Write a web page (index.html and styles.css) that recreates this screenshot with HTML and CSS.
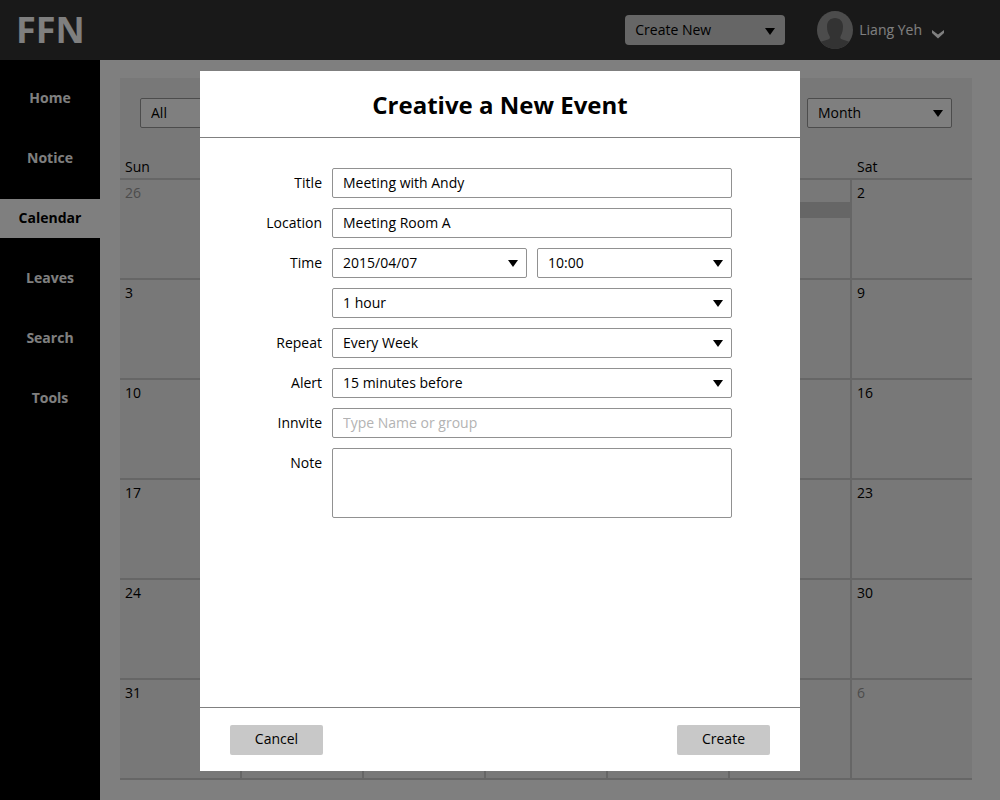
FILE: index.html
```html
<!DOCTYPE html>
<html lang="en">
<head>
<meta charset="utf-8">
<meta name="viewport" content="width=device-width, initial-scale=1">
<title>FFN Calendar</title>
<link rel="stylesheet" href="styles.css">
</head>
<body>
<div class="app">
  <header class="topbar">
    <a class="logo" href="#">FFN</a>
    <div class="topbar-actions">
      <select class="select create-new" aria-label="Create new item"><option>Create New</option></select>
      <button class="user" type="button">
        <svg class="avatar" viewBox="0 0 36 38" aria-hidden="true">
          <clipPath id="face"><ellipse cx="18" cy="19" rx="18" ry="19"/></clipPath>
          <g clip-path="url(#face)">
            <path fill="#999" d="M0 0h36v38H0z"/>
            <path fill="#666" d="M18 7c-5 0-8 3.500-8 8.500 0 4.500 1 7 2.500 9.500 1 2 .2 3-1.500 3.500L3 31v7h30v-7l-7.500-2.500c-2-.6-2.800-1.800-1.800-3.500C25.200 22.500 26 19.500 26 15.500 26 10.500 23 7 18 7z"/>
          </g>
        </svg>
        <span class="user-name">Liang Yeh</span>
        <svg class="chevron" viewBox="0 0 12 9" aria-hidden="true"><path d="M0 0l6 4.500L12 0v3L6 8.500 0 3z" fill="#fff"/></svg>
      </button>
    </div>
  </header>
  <nav class="sidebar" aria-label="Main">
    <a class="nav-link" href="#">Home</a>
    <a class="nav-link" href="#">Notice</a>
    <a class="nav-link nav-link-active" href="#" aria-current="page">Calendar</a>
    <a class="nav-link" href="#">Leaves</a>
    <a class="nav-link" href="#">Search</a>
    <a class="nav-link" href="#">Tools</a>
  </nav>
  <main class="content">
    <section class="panel">
      <div class="toolbar">
        <select class="select filter" aria-label="Filter"><option>All</option></select>
        <select class="select filter" aria-label="View"><option>Month</option></select>
      </div>
      <table class="calendar">
        <thead>
          <tr><th scope="col">Sun</th><td></td><td></td><td></td><td></td><td></td><th scope="col">Sat</th></tr>
        </thead>
        <tbody>
          <tr><td class="muted">26</td><td></td><td></td><td></td><td></td><td><div class="event"></div></td><td>2</td></tr>
          <tr><td>3</td><td></td><td></td><td></td><td></td><td></td><td>9</td></tr>
          <tr><td>10</td><td></td><td></td><td></td><td></td><td></td><td>16</td></tr>
          <tr><td>17</td><td></td><td></td><td></td><td></td><td></td><td>23</td></tr>
          <tr><td>24</td><td></td><td></td><td></td><td></td><td></td><td>30</td></tr>
          <tr><td>31</td><td></td><td></td><td></td><td></td><td></td><td class="muted">6</td></tr>
        </tbody>
      </table>
    </section>
  </main>
</div>

<div class="overlay">
  <form class="modal" role="dialog" aria-modal="true" aria-labelledby="modal-title">
    <h1 class="modal-title" id="modal-title">Creative a New Event</h1>
    <div class="fields">
      <label class="label" for="title">Title</label>
      <input class="field" id="title" type="text" value="Meeting with Andy">
      <label class="label" for="location">Location</label>
      <input class="field" id="location" type="text" value="Meeting Room A">
      <label class="label" for="date">Time</label>
      <div class="time">
        <select class="select" id="date"><option>2015/04/07</option></select>
        <select class="select" aria-label="Start time"><option>10:00</option></select>
        <select class="select duration" aria-label="Duration"><option>1 hour</option></select>
      </div>
      <label class="label" for="repeat">Repeat</label>
      <select class="select" id="repeat"><option>Every Week</option></select>
      <label class="label" for="alert">Alert</label>
      <select class="select" id="alert"><option>15 minutes before</option></select>
      <label class="label" for="invite">Innvite</label>
      <input class="field" id="invite" type="text" placeholder="Type Name or group">
      <label class="label" for="note">Note</label>
      <textarea class="field note" id="note"></textarea>
    </div>
    <div class="modal-footer">
      <button class="button" type="button">Cancel</button>
      <button class="button" type="button">Create</button>
    </div>
  </form>
</div>
</body>
</html>
```

FILE: styles.css
```css
* {
  box-sizing: border-box;
}

body {
  margin: 0;
  background: #fff;
  color: #000;
  font: 14px/20px "Open Sans", "Noto Sans", sans-serif;
}

a {
  color: inherit;
  text-decoration: none;
}

button,
input,
select,
textarea {
  margin: 0;
  color: inherit;
  font: inherit;
}

.app {
  display: grid;
  grid-template: 60px 1fr / 100px 1fr;
  min-height: 100vh;
}

/* Top bar */
.topbar {
  grid-column: 1 / -1;
  display: flex;
  align-items: center;
  justify-content: space-between;
  padding: 0 56px 0 16px;
  background: #333;
  color: #fff;
}

.logo {
  font-size: 36px;
  font-weight: 700;
  line-height: 60px;
}

.topbar-actions {
  display: flex;
  align-items: center;
  gap: 32px;
}

.user {
  display: flex;
  align-items: center;
  gap: 6px;
  padding: 0;
  border: 0;
  background: none;
}

.avatar {
  width: 36px;
  height: 38px;
}

.chevron {
  width: 12px;
  height: 9px;
  margin: 8px 0 0 4px;
}

/* Form controls */
.select,
.field {
  width: 100%;
  height: 30px;
  padding: 0 10px;
  border: 1px solid #919191;
  border-radius: 2px;
  background: #fff;
}

.field {
  padding-bottom: 2px;
}

.select {
  appearance: none;
  background: #fff url("data:image/svg+xml,%3Csvg xmlns='http://www.w3.org/2000/svg' width='10' height='7'%3E%3Cpath d='M0 0h10L5 7z'/%3E%3C/svg%3E") no-repeat right 8px center;
}

.create-new {
  width: 160px;
  border: 0;
  border-radius: 4px;
  background-color: #ccc;
  background-position: right 10px top 13px;
  color: #000;
}

.field::placeholder {
  color: #b3b3b3;
  opacity: 1;
}

/* Sidebar */
.sidebar {
  display: flex;
  flex-direction: column;
  gap: 21px;
  padding-top: 19px;
  background: #000;
  color: #fff;
}

.nav-link {
  padding-bottom: 2px;
  font-weight: 700;
  line-height: 37px;
  text-align: center;
}

.nav-link-active {
  background: #fff;
  color: #000;
}

/* Calendar */
.content {
  padding: 18px 28px 20px 20px;
}

.panel {
  overflow: hidden;
  background: #f0f0f0;
}

.toolbar {
  display: flex;
  justify-content: space-between;
  padding: 20px 20px 0;
}

.filter {
  width: 145px;
  border-color: #999;
}

/* The first column's divider falls outside the panel and is clipped. */
.calendar {
  width: calc(100% + 2px);
  margin-left: -2px;
  table-layout: fixed;
  border-spacing: 0;
}

.calendar th,
.calendar td {
  padding: 0 0 0 5px;
  border-bottom: 2px solid #ccc;
  font-weight: 400;
  text-align: left;
}

.calendar th {
  height: 52px;
  padding: 0 0 1px 7px;
  vertical-align: bottom;
}

.calendar tbody td {
  height: 100px;
  padding-top: 3px;
  border-left: 2px solid #ccc;
  vertical-align: top;
}

.calendar .muted {
  color: #999;
}

.event {
  height: 16px;
  margin: 19px 0 0 -5px;
  background: #ccc;
}

/* Dialog */
.overlay {
  position: fixed;
  inset: 0;
  display: flex;
  align-items: flex-start;
  justify-content: center;
  padding: 71px 20px 20px;
  overflow: auto;
  background: rgba(0, 0, 0, 0.5);
}

.modal {
  display: flex;
  flex-direction: column;
  width: 100%;
  max-width: 600px;
  min-height: 700px;
  background: #fff;
}

.modal-title {
  margin: 0;
  padding: 18px 20px 16px;
  border-bottom: 1px solid #808080;
  font-size: 24px;
  font-weight: 700;
  line-height: 32px;
  text-align: center;
}

.fields {
  flex: 1;
  display: grid;
  grid-template-columns: 92px 1fr;
  align-content: start;
  gap: 10px;
  padding: 30px 68px 30px 30px;
}

.label {
  line-height: 30px;
  text-align: right;
}

.time {
  display: grid;
  grid-template-columns: 1fr 1fr;
  gap: 10px;
}

.duration {
  grid-column: 1 / -1;
}

.note {
  display: block;
  height: 70px;
  padding: 4px 10px;
  resize: none;
}

.modal-footer {
  display: flex;
  justify-content: space-between;
  padding: 17px 30px 16px;
  border-top: 1px solid #808080;
}

.button {
  width: 93px;
  height: 30px;
  padding: 0 0 2px;
  border: 0;
  border-radius: 2px;
  background: #c8c8c8;
}
```
